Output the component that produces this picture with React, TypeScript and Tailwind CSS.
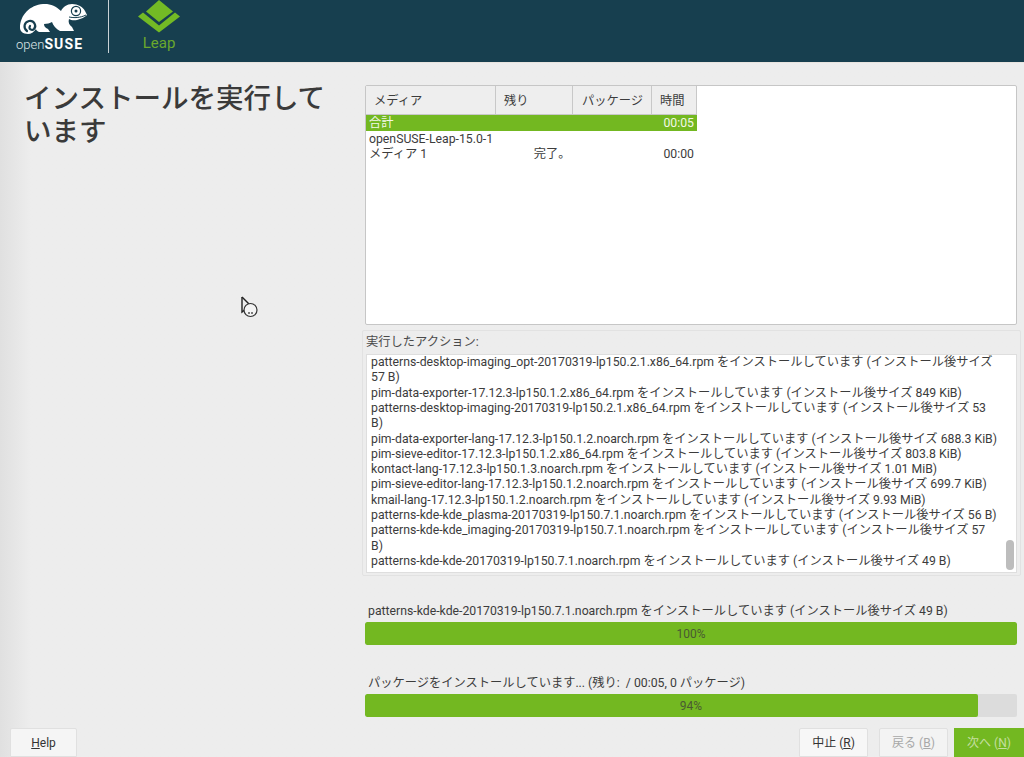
import React from "react";

const logLines = [
  "patterns-desktop-imaging_opt-20170319-lp150.2.1.x86_64.rpm をインストールしています (インストール後サイズ",
  "57 B)",
  "pim-data-exporter-17.12.3-lp150.1.2.x86_64.rpm をインストールしています (インストール後サイズ 849 KiB)",
  "patterns-desktop-imaging-20170319-lp150.2.1.x86_64.rpm をインストールしています (インストール後サイズ 53",
  "B)",
  "pim-data-exporter-lang-17.12.3-lp150.1.2.noarch.rpm をインストールしています (インストール後サイズ 688.3 KiB)",
  "pim-sieve-editor-17.12.3-lp150.1.2.x86_64.rpm をインストールしています (インストール後サイズ 803.8 KiB)",
  "kontact-lang-17.12.3-lp150.1.3.noarch.rpm をインストールしています (インストール後サイズ 1.01 MiB)",
  "pim-sieve-editor-lang-17.12.3-lp150.1.2.noarch.rpm をインストールしています (インストール後サイズ 699.7 KiB)",
  "kmail-lang-17.12.3-lp150.1.2.noarch.rpm をインストールしています (インストール後サイズ 9.93 MiB)",
  "patterns-kde-kde_plasma-20170319-lp150.7.1.noarch.rpm をインストールしています (インストール後サイズ 56 B)",
  "patterns-kde-kde_imaging-20170319-lp150.7.1.noarch.rpm をインストールしています (インストール後サイズ 57",
  "B)",
  "patterns-kde-kde-20170319-lp150.7.1.noarch.rpm をインストールしています (インストール後サイズ 49 B)",
];

const font = "font-['Roboto','Noto_Sans_CJK_JP',sans-serif]";

function Logo() {
  return (
    <svg width="80" height="37" viewBox="10 0 80 37" className="block">
      <path
        d="M20 28C20 15 30 5 43 4c7-.5 13 2 18 7 2-4 6-7 11-7 6 0 11 3 13 7l2 4c-2 2-6 4-10 5-3 .6-6 .3-8-1-1 3 0 6 3 8l2 4H60c-4-2-7-6-8-9-2 1-5 2-8 2 0 3 2 4 4 5l2 3H39c-2-1-3-2-3-3-2 3-5 5-8 5-5 0-8-3-8-6z"
        fill="#fff"
      />
      <circle cx="76" cy="11" r="4.6" fill="none" stroke="#173f4f" strokeWidth="1.2" />
      <circle cx="76" cy="11" r="1.5" fill="#173f4f" />
      <path d="M69 17c5 1 11 1 17-2" fill="none" stroke="#173f4f" strokeWidth="1" />
      <path
        d="M27 31c-4-3-3-9 2-10 5-1 8 5 5 8-2 2-6 0-4-3"
        fill="none"
        stroke="#173f4f"
        strokeWidth="2.2"
        strokeLinecap="round"
      />
    </svg>
  );
}

function LeapMark() {
  return (
    <svg width="44" height="34" viewBox="137 0 44 34" className="block">
      <path d="M159 0l14 11.5-14 10.5-13-10.500z" fill="#73ba25" />
      <path d="M143 12.500l16 13 16-13 5 4-21 16-21-16z" fill="#73ba25" />
    </svg>
  );
}

function Bar({ label, pct }: { label: string; pct: number }) {
  return (
    <div className="flex flex-col">
      <div className="pl-[3px] pt-[3px] h-[21px] text-[12.25px] leading-[15px] text-[#3c3c3c] whitespace-pre">{label}</div>
      <div className="relative h-[23px] rounded-[2px] bg-[#dcdcdc] overflow-hidden">
        <div className="h-full bg-[#73b821] rounded-[2px]" style={{ width: `${pct}%` }} />
        <div className="absolute inset-0 flex items-center justify-center text-[12px] text-[#4a5a33]">{pct}%</div>
      </div>
    </div>
  );
}

export default function App() {
  return (
    <div className={`${font} w-[1024px] h-[757px] overflow-hidden flex flex-col bg-gradient-to-r from-[#e0e0e0] via-[#ededed] via-[3%] to-[#ededed] text-[#3c3c3c]`}>
      <header className="h-[63px] shrink-0 bg-[#173f4f] flex items-start border-b border-[#e8e4df]">
        <div className="w-[109px] h-[53px] border-r border-[#c8d2d6] flex flex-col pl-[10px]">
          <Logo />
          <div className="pl-[6px] text-[13px] leading-[14px] text-white whitespace-nowrap">
            <span className="text-[#dfe6e9] font-light">open</span>
            <span className="font-bold text-[14px] tracking-[1.1px]">SUSE</span>
          </div>
        </div>
        <div className="ml-[28px] flex flex-col items-center w-[44px]">
          <LeapMark />
          <div className="text-[15px] leading-[18px] text-[#6aa82c]">Leap</div>
        </div>
      </header>

      <main className="flex-1 flex min-h-0">
        <aside className="w-[362px] shrink-0 pl-[24px] pt-[19px] pr-[30px]">
          <h1 className="text-[27.5px] leading-[33px] font-medium text-[#3a3a3a]">インストールを実行しています</h1>
          {/* busy cursor */}
          <svg width="20" height="22" viewBox="0 0 20 22" className="mt-[148px] ml-[217px] block">
            <path d="M1 1v15l4-3" fill="none" stroke="#222" strokeWidth="1.4" />
            <path d="M1 1l7 7" fill="none" stroke="#222" strokeWidth="1.4" />
            <circle cx="9.500" cy="14" r="6.500" fill="#f4f4f4" stroke="#333" strokeWidth="1.2" />
            <circle cx="8" cy="17" r="1" fill="#555" />
            <circle cx="11" cy="17" r="1" fill="#555" />
          </svg>
        </aside>

        <section className="flex-1 flex flex-col min-w-0">
          <div className="ml-[3px] mr-[7px] mt-[22px] h-[241px] bg-white border border-[#c6c6c6] rounded-[2px] text-[12.25px]">
            <div className="flex h-[29px]">
              <div className="w-[130px] bg-[#eeeeee] border-r border-b border-[#c8c8c8] pl-[8px] pt-[2px] flex items-center">メディア</div>
              <div className="w-[77px] bg-[#eeeeee] border-r border-b border-[#c8c8c8] pl-[8px] pt-[2px] flex items-center">残り</div>
              <div className="w-[79px] bg-[#eeeeee] border-r border-b border-[#c8c8c8] pl-[9px] pt-[2px] flex items-center whitespace-nowrap">パッケージ</div>
              <div className="w-[45px] bg-[#eeeeee] border-r border-b border-[#c8c8c8] pl-[8px] pt-[2px] flex items-center">時間</div>
            </div>
            <div className="w-[331px] h-[16px] pt-[1px] bg-[#73b821] text-[#f2f7e6] flex justify-between items-center px-[3px] leading-[15px]">
              <span>合計</span>
              <span>00:05</span>
            </div>
            <div className="w-[331px] h-[15px] mt-[1px] px-[3px] leading-[15px]">openSUSE-Leap-15.0-1</div>
            <div className="w-[331px] h-[15px] px-[3px] leading-[15px] flex">
              <span className="w-[165px]">メディア 1</span>
              <span className="w-[130px]">完了。</span>
              <span>00:00</span>
            </div>
          </div>

          <div className="mr-[3px] mt-[5px] h-[247px] border border-[#e2e2e2] rounded-[2px] px-[3px] flex flex-col">
            <div className="h-[23px] pt-[4px] text-[12.25px] leading-[15px] text-[#4a4a4a]">実行したアクション:</div>
            <div className="relative h-[219px] bg-white border border-[#dedede] pl-[4px] overflow-hidden">
              {logLines.map((line, i) => (
                <div key={i} className="text-[12.25px] leading-[15.3px] text-[#3c3c3c] whitespace-nowrap">
                  {line}
                </div>
              ))}
              <div className="absolute right-[2px] top-[185px] w-[8px] h-[30px] rounded-full bg-[#bdbdbd]" />
            </div>
          </div>

          <div className="ml-[3px] mr-[7px] mt-[25px] flex flex-col gap-[28px]">
            <Bar label="patterns-kde-kde-20170319-lp150.7.1.noarch.rpm をインストールしています (インストール後サイズ 49 B)" pct={100} />
            <Bar label="パッケージをインストールしています... (残り:  / 00:05, 0 パッケージ)" pct={94} />
          </div>
        </section>
      </main>

      <footer className="h-[40px] shrink-0 flex items-end text-[12px]">
        <button className="ml-[10px] w-[67px] h-[29px] bg-[#f5f5f5] border border-[#e0e0e0] rounded-t-[2px] text-[#333]">
          <span className="underline">H</span>elp
        </button>
        <div className="flex-1" />
        <button className="w-[69px] h-[29px] bg-[#f7f7f7] border border-[#e0e0e0] rounded-t-[2px] text-[#333]">
          中止 (<span className="underline">R</span>)
        </button>
        <button className="ml-[11px] w-[69px] h-[29px] bg-[#f3f3f3] border border-[#e0e0e0] rounded-t-[2px] text-[#a8a8a8]">
          戻る (<span className="underline">B</span>)
        </button>
        <button className="ml-[6px] w-[70px] h-[29px] bg-[#73b821] text-[#c5dfa0]">
          次へ (<span className="underline">N</span>)
        </button>
      </footer>
    </div>
  );
}
